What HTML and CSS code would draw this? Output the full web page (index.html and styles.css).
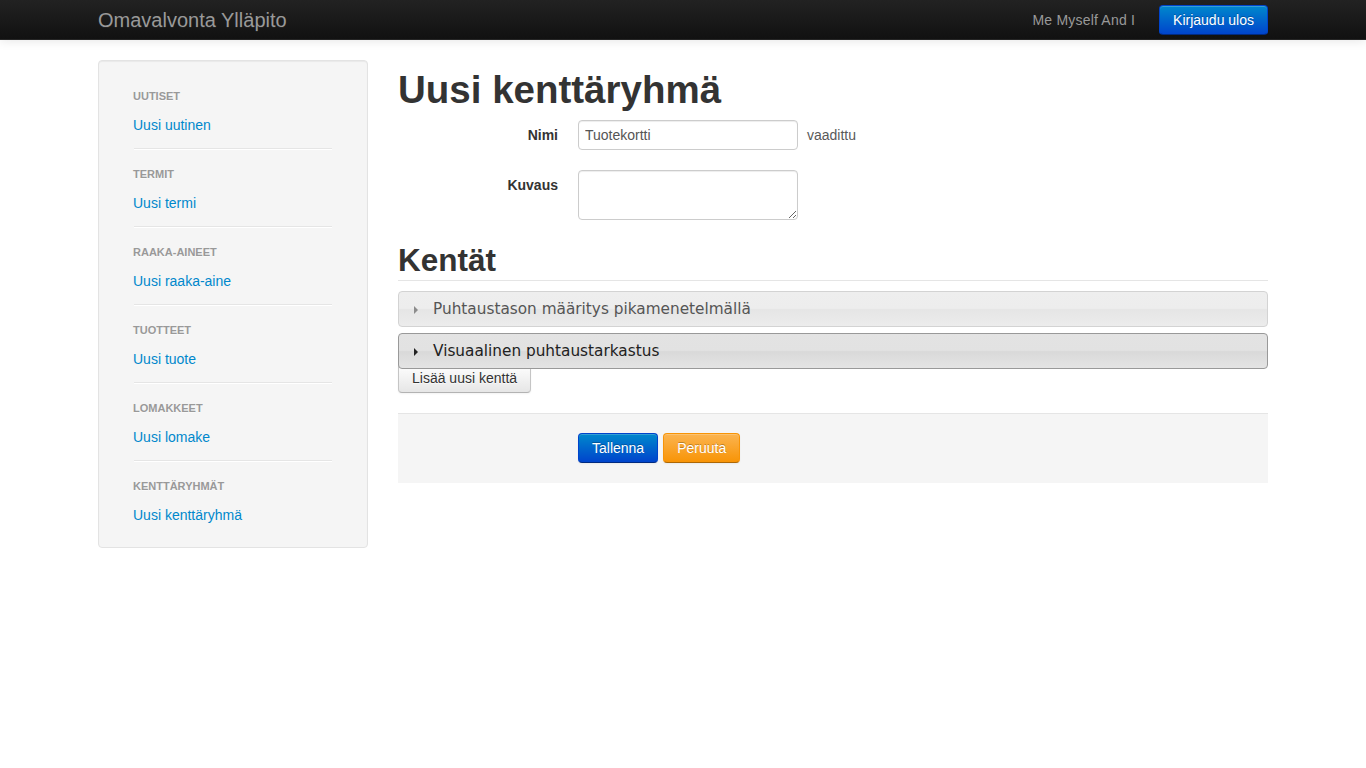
FILE: index.html
```html
<!DOCTYPE html>
<html lang="fi">
<head>
<meta charset="utf-8">
<title>Uusi kenttäryhmä</title>
<link rel="stylesheet" href="styles.css">
</head>
<body>
<header class="navbar">
  <div class="navbar-inner">
    <a class="brand" href="#">Omavalvonta Ylläpito</a>
    <div class="navbar-right">
      <span class="navbar-text">Me Myself And I</span>
      <a class="btn btn-primary btn-nav" href="#">Kirjaudu ulos</a>
    </div>
  </div>
</header>
<div class="container">
  <aside class="sidebar">
    <ul class="nav-list">
      <li class="nav-header">Uutiset</li>
      <li class="nav-item"><a href="#">Uusi uutinen</a></li>
      <li class="divider"></li>
      <li class="nav-header">Termit</li>
      <li class="nav-item"><a href="#">Uusi termi</a></li>
      <li class="divider"></li>
      <li class="nav-header">Raaka-aineet</li>
      <li class="nav-item"><a href="#">Uusi raaka-aine</a></li>
      <li class="divider"></li>
      <li class="nav-header">Tuotteet</li>
      <li class="nav-item"><a href="#">Uusi tuote</a></li>
      <li class="divider"></li>
      <li class="nav-header">Lomakkeet</li>
      <li class="nav-item"><a href="#">Uusi lomake</a></li>
      <li class="divider"></li>
      <li class="nav-header">Kenttäryhmät</li>
      <li class="nav-item"><a href="#">Uusi kenttäryhmä</a></li>
    </ul>
  </aside>
  <main class="content">
    <h1 class="page-title">Uusi kenttäryhmä</h1>
    <form class="form-horizontal">
      <div class="control-group">
        <label class="control-label" for="nimi">Nimi</label>
        <div class="controls">
          <input id="nimi" class="input" type="text" value="Tuotekortti">
          <span class="help-inline">vaadittu</span>
        </div>
      </div>
      <div class="control-group">
        <label class="control-label" for="kuvaus">Kuvaus</label>
        <div class="controls">
          <textarea id="kuvaus" class="textarea"></textarea>
        </div>
      </div>
      <h2 class="section-title">Kentät</h2>
      <div class="accordion">
        <div class="acc-header"><span class="acc-icon"></span>Puhtaustason määritys pikamenetelmällä</div>
        <div class="acc-header acc-hover"><span class="acc-icon"></span>Visuaalinen puhtaustarkastus</div>
      </div>
      <button type="button" class="btn btn-add">Lisää uusi kenttä</button>
      <div class="form-actions">
        <button type="button" class="btn btn-primary">Tallenna</button>
        <button type="button" class="btn btn-warning">Peruuta</button>
      </div>
    </form>
  </main>
</div>
</body>
</html>
```

FILE: styles.css
```css
* { box-sizing: border-box; }
html, body { margin: 0; padding: 0; }
body {
  font-family: "Liberation Sans", Arial, sans-serif;
  font-size: 14px;
  line-height: 20px;
  color: #333;
  background: #fff;
}
a { color: #0088cc; text-decoration: none; }
ul { list-style: none; margin: 0; padding: 0; }

/* navbar */
.navbar {
  height: 40px;
  background: linear-gradient(to bottom, #222222, #111111);
  border-bottom: 1px solid #252525;
  box-shadow: 0 1px 10px rgba(0,0,0,.1);
}
.navbar-inner {
  width: 1170px;
  margin: 0 auto;
  height: 39px;
  display: flex;
  align-items: center;
  justify-content: space-between;
}
.brand {
  font-size: 20px;
  line-height: 20px;
  color: #999;
  text-shadow: 0 1px 0 #222;
}
.navbar-right {
  display: flex;
  align-items: center;
  gap: 24px;
}
.navbar-text { color: #999; letter-spacing: 0.2px; }

/* buttons */
.btn {
  display: inline-block;
  height: 30px;
  padding: 4px 13px;
  font-family: "Liberation Sans", Arial, sans-serif;
  font-size: 14px;
  line-height: 20px;
  color: #333;
  text-align: center;
  border: 1px solid #c5c5c5;
  border-bottom-color: #b3b3b3;
  border-radius: 4px;
  background: linear-gradient(to bottom, #ffffff, #e6e6e6);
  box-shadow: inset 0 1px 0 rgba(255,255,255,.2), 0 1px 2px rgba(0,0,0,.05);
  text-shadow: 0 1px 1px rgba(255,255,255,.75);
  cursor: pointer;
}
.btn-nav { margin-top: 1px; }
.btn-primary {
  color: #fff;
  text-shadow: 0 -1px 0 rgba(0,0,0,.25);
  background: linear-gradient(to bottom, #0088cc, #0044cc);
  border-color: #0044cc #0044cc #002a80;
}
.btn-warning {
  color: #fff;
  text-shadow: 0 -1px 0 rgba(0,0,0,.25);
  background: linear-gradient(to bottom, #fbb450, #f89406);
  border-color: #f89406 #f89406 #ad6704;
}

/* layout */
.container {
  width: 1170px;
  margin: 0 auto;
  padding-top: 20px;
  display: flex;
  align-items: flex-start;
  gap: 30px;
}
.sidebar {
  width: 270px;
  flex: none;
  background: #f5f5f5;
  border: 1px solid #e3e3e3;
  border-radius: 4px;
  box-shadow: inset 0 1px 1px rgba(0,0,0,.05);
  padding: 22px 19px 19px;
}
.nav-list { padding: 0 15px; }
.nav-header {
  font-size: 11px;
  font-weight: bold;
  line-height: 20px;
  padding: 3px 0;
  color: #999;
  text-transform: uppercase;
  text-shadow: 0 1px 0 rgba(255,255,255,.5);
}
.nav-item { margin-top: 3px; }
.nav-item a { display: block; padding: 3px 0; line-height: 20px; }
.divider {
  height: 2px;
  margin: 10px 1px 11px;
  background: #e5e5e5;
  border-bottom: 1px solid #fff;
}

.content { width: 870px; flex: none; }
.page-title {
  margin: 10px 0;
  font-size: 38.5px;
  line-height: 40px;
  font-weight: bold;
  color: #333;
}

/* form */
.control-group { display: flex; margin-bottom: 20px; }
.control-label {
  width: 160px;
  padding-top: 5px;
  text-align: right;
  font-weight: bold;
  margin-right: 20px;
}
.controls { display: flex; align-items: center; gap: 9px; align-self: flex-start; }
.input, .textarea {
  width: 220px;
  padding: 4px 6px;
  font-family: "Liberation Sans", Arial, sans-serif;
  font-size: 14px;
  line-height: 20px;
  color: #555;
  border: 1px solid #ccc;
  border-radius: 4px;
  box-shadow: inset 0 1px 1px rgba(0,0,0,.075);
  background: #fff;
  margin: 0;
}
.input { height: 30px; }
.textarea { height: 50px; resize: vertical; display: block; }
.help-inline { color: #595959; }

.section-title {
  margin: 0 0 10px;
  font-size: 31.5px;
  line-height: 40px;
  font-weight: bold;
  color: #333;
  border-bottom: 1px solid #e5e5e5;
}

/* accordion */
.accordion { display: flex; flex-direction: column; gap: 6px; }
.acc-header {
  position: relative;
  z-index: 1;
  height: 36px;
  padding: 8px 8px 8px 34px;
  font-family: "DejaVu Sans", Verdana, sans-serif;
  font-size: 15.3px;
  line-height: 18px;
  color: #555;
  border: 1px solid #d3d3d3;
  border-radius: 4px;
  background: linear-gradient(to bottom, #eeeeee 0%, #ededed 48%, #e5e5e5 52%, #ececec 100%);
  display: flex;
  align-items: center;
}
.acc-hover {
  color: #212121;
  border-color: #999;
  background: linear-gradient(to bottom, #e3e3e3 0%, #e2e2e2 48%, #d9d9d9 52%, #e4e4e4 100%);
}
.acc-icon {
  position: absolute;
  left: 15px;
  top: 14px;
  width: 0;
  height: 0;
  border-top: 4px solid transparent;
  border-bottom: 4px solid transparent;
  border-left: 4px solid #8c8c8c;
}
.acc-hover .acc-icon { border-left-color: #222; }

.btn-add { margin-top: -6px; display: block; }

.form-actions {
  margin-top: 20px;
  padding: 19px 20px 20px 180px;
  background: #f5f5f5;
  border-top: 1px solid #e5e5e5;
  display: flex;
  gap: 5px;
}
```
